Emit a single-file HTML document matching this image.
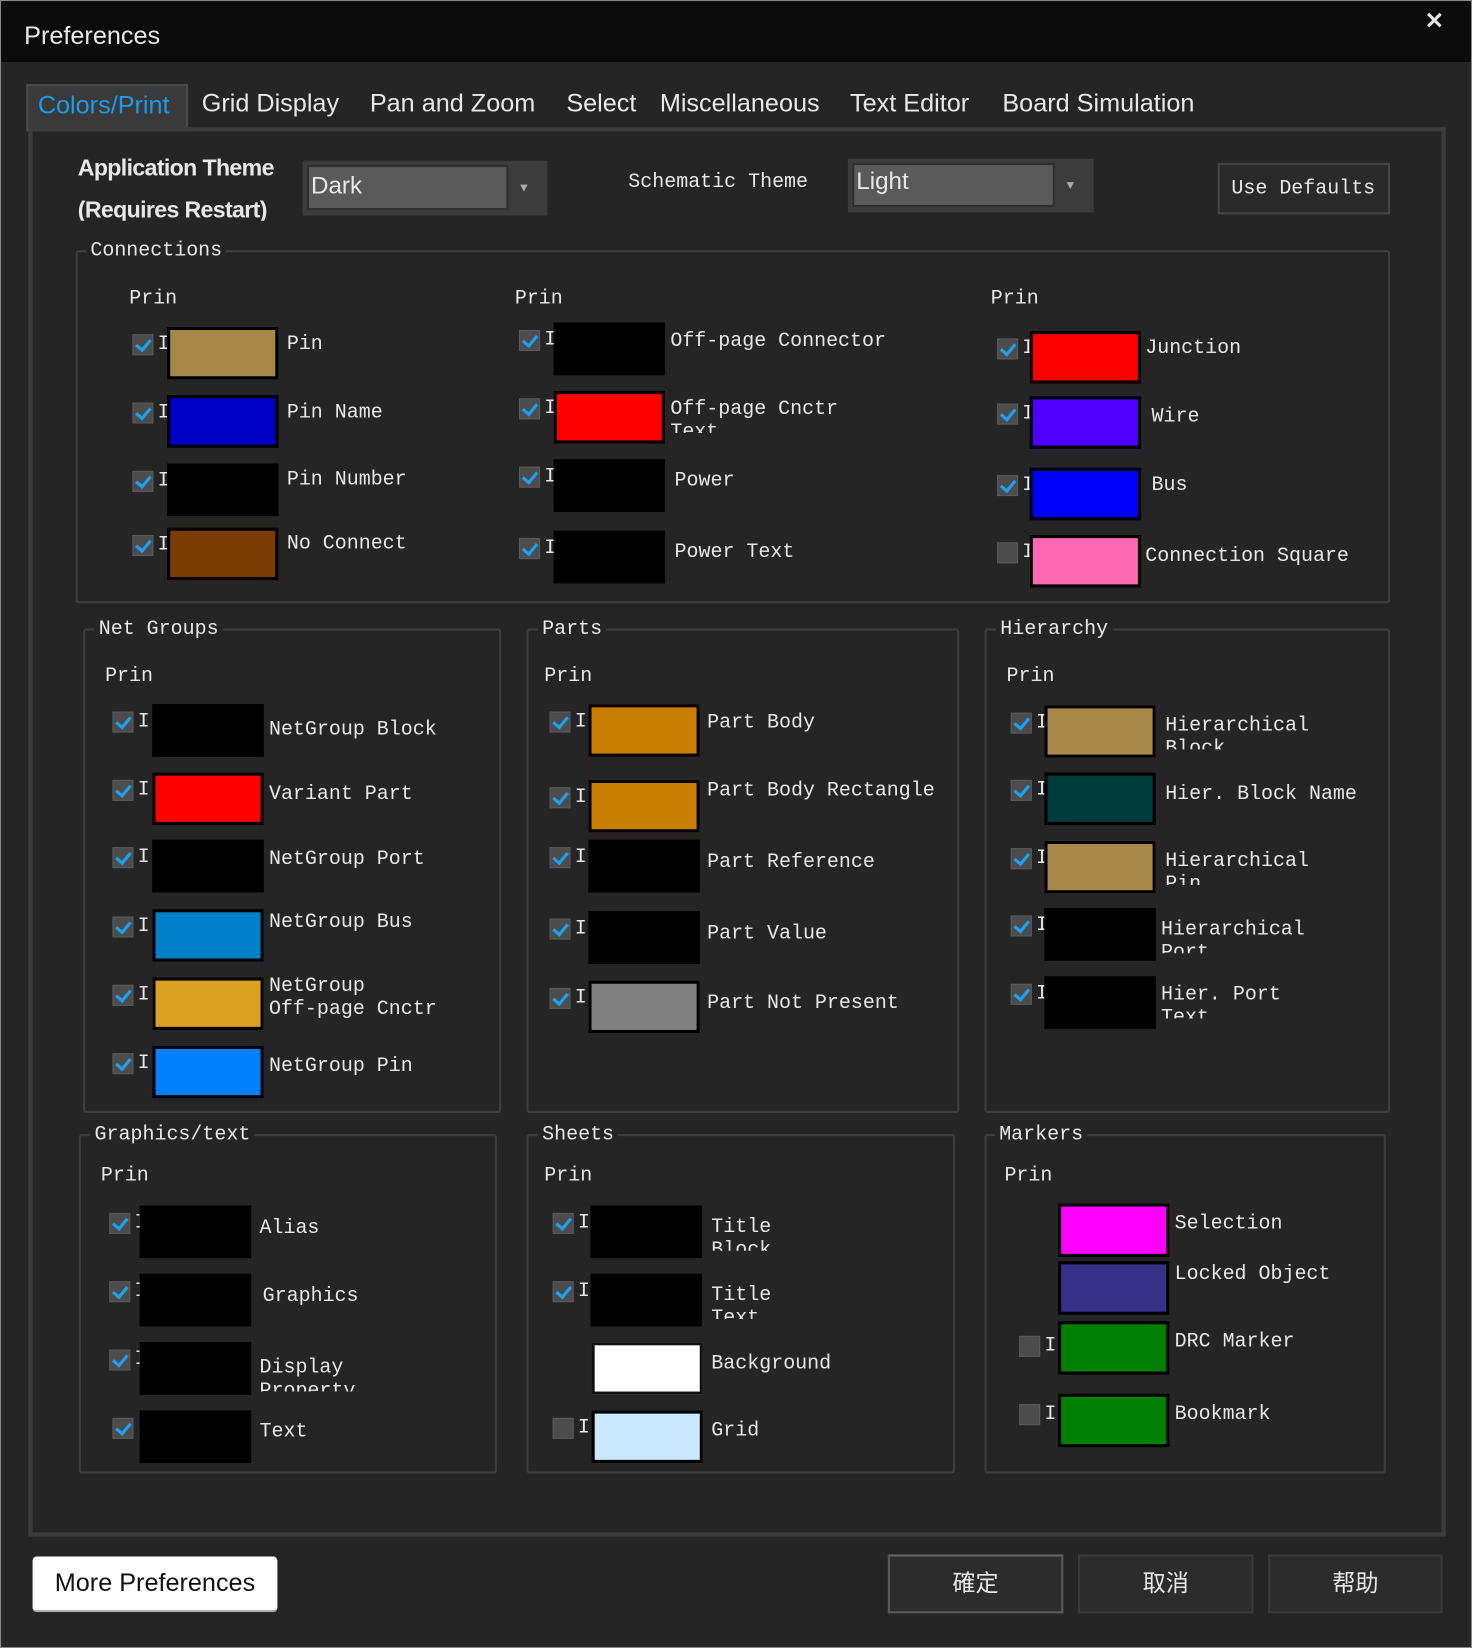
<!DOCTYPE html>
<html><head><meta charset="utf-8">
<style>
html,body{margin:0;padding:0;background:#252525;width:1472px;height:1648px;overflow:hidden}
#w{position:absolute;left:0;top:0;width:1401px;height:1568px;transform-origin:0 0;transform:scale(1.05068,1.05102);background:#252525;font-family:"Liberation Mono",monospace;color:#e8e8e8;font-size:19px}
#w div{position:absolute;box-sizing:border-box}
.t{white-space:pre;line-height:22px}
.sans{font-family:"Liberation Sans","Noto Sans CJK SC",sans-serif}
.grp{border:2px solid #3e3e3e;border-radius:3px}
.gt{background:#252525;padding:0 4px;line-height:22px}
.cb{width:20px;height:20px;background:#4c4c4c;border:1px solid #5a5a5a}
.ck::after{content:"";position:absolute;left:5px;top:1px;width:6px;height:11px;border:solid #1ea0f0;border-width:0 3px 3px 0;transform:rotate(40deg)}
.sw{width:106px;height:50px;border:3px solid #000}
.clip{overflow:hidden;height:34px}
.btn{background:#2c2c2c;border:2px solid #3a3a3a;text-align:center;font-family:"Liberation Sans","Noto Sans CJK SC",sans-serif;font-size:22px;line-height:52px}
.tab{font-size:24px}
</style></head><body>
<div id="w">
<div style="left:0;top:0;width:1401px;height:59px;background:#0b0b0b"></div>
<div class="t sans" style="left:23px;top:24px;font-size:24px">Preferences</div>
<div class="t sans" style="left:1356px;top:9px;font-size:22px;font-weight:bold">✕</div>
<div style="left:0;top:0;width:1401px;height:1568px;border:1px solid #888"></div>

<!-- tabs -->
<div style="left:25px;top:80px;width:154px;height:45px;background:#3a3a3a;border:2px solid #4a4a4a;border-bottom:none"></div>
<div style="left:27px;top:121px;width:1349px;height:1341px;border:4px solid #3c3c3c"></div>
<div class="t sans tab" style="left:36px;top:90px;color:#1e9be8">Colors/Print</div>
<div class="t sans tab" style="left:192px;top:88px">Grid Display</div>
<div class="t sans tab" style="left:352px;top:88px">Pan and Zoom</div>
<div class="t sans tab" style="left:539px;top:88px">Select</div>
<div class="t sans tab" style="left:628px;top:88px">Miscellaneous</div>
<div class="t sans tab" style="left:809px;top:88px">Text Editor</div>
<div class="t sans tab" style="left:954px;top:88px">Board Simulation</div>

<!-- top row -->
<div class="sans" style="left:74px;top:140px;width:200px;height:70px;overflow:hidden;font-weight:bold;font-size:22px;letter-spacing:-0.6px;line-height:40px;white-space:pre">Application Theme
(Requires Restart)</div>
<div style="left:288px;top:153px;width:233px;height:52px;background:#3c3c3c"></div>
<div style="left:292px;top:157px;width:192px;height:43px;background:#5a5a5a;border:2px solid #2e2e2e"></div>
<div class="t sans" style="left:296px;top:165px;font-size:23px">Dark</div>
<div class="t" style="left:495px;top:168px;font-size:12px;color:#aaa">▼</div>
<div class="t" style="left:598px;top:162px">Schematic Theme</div>
<div style="left:807px;top:151px;width:234px;height:51px;background:#3c3c3c"></div>
<div style="left:811px;top:155px;width:193px;height:42px;background:#5a5a5a;border:2px solid #2e2e2e"></div>
<div class="t sans" style="left:815px;top:161px;font-size:23px">Light</div>
<div class="t" style="left:1015px;top:166px;font-size:12px;color:#aaa">▼</div>
<div style="left:1159px;top:155px;width:164px;height:49px;border:2px solid #444;background:#2a2a2a"></div>
<div class="t" style="left:1172px;top:168px">Use Defaults</div>

<!-- Connections -->
<div class="grp" style="left:72px;top:238px;width:1251px;height:336px"></div>
<div class="t gt" style="left:82px;top:227px">Connections</div>
<div class="t" style="left:123px;top:273px">Prin</div>
<div class="cb ck" style="left:126px;top:318px"></div><div class="t" style="left:150px;top:316px">I</div><div class="sw" style="left:159px;top:311px;background:#a88848"></div><div class="t" style="left:273px;top:316px">Pin</div>
<div class="cb ck" style="left:126px;top:383px"></div><div class="t" style="left:150px;top:381px">I</div><div class="sw" style="left:159px;top:376px;background:#0000c8"></div><div class="t" style="left:273px;top:381px">Pin Name</div>
<div class="cb ck" style="left:126px;top:448px"></div><div class="t" style="left:150px;top:446px">I</div><div class="sw" style="left:159px;top:441px;background:#000"></div><div class="t" style="left:273px;top:445px">Pin Number</div>
<div class="cb ck" style="left:126px;top:509px"></div><div class="t" style="left:150px;top:507px">I</div><div class="sw" style="left:159px;top:502px;background:#7a3c00"></div><div class="t" style="left:273px;top:506px">No Connect</div>

<div class="t" style="left:490px;top:273px">Prin</div>
<div class="cb ck" style="left:494px;top:314px"></div><div class="t" style="left:518px;top:312px">I</div><div class="sw" style="left:527px;top:307px;background:#000"></div><div class="t" style="left:638px;top:313px">Off-page Connector</div>
<div class="cb ck" style="left:494px;top:379px"></div><div class="t" style="left:518px;top:377px">I</div><div class="sw" style="left:527px;top:372px;background:#ff0000"></div><div class="t clip" style="left:638px;top:378px">Off-page Cnctr
Text</div>
<div class="cb ck" style="left:494px;top:444px"></div><div class="t" style="left:518px;top:442px">I</div><div class="sw" style="left:527px;top:437px;background:#000"></div><div class="t" style="left:642px;top:446px">Power</div>
<div class="cb ck" style="left:494px;top:512px"></div><div class="t" style="left:518px;top:510px">I</div><div class="sw" style="left:527px;top:505px;background:#000"></div><div class="t" style="left:642px;top:514px">Power Text</div>

<div class="t" style="left:943px;top:273px">Prin</div>
<div class="cb ck" style="left:949px;top:322px"></div><div class="t" style="left:973px;top:320px">I</div><div class="sw" style="left:980px;top:315px;background:#ff0000"></div><div class="t" style="left:1090px;top:320px">Junction</div>
<div class="cb ck" style="left:949px;top:384px"></div><div class="t" style="left:973px;top:382px">I</div><div class="sw" style="left:980px;top:377px;background:#5000ff"></div><div class="t" style="left:1096px;top:385px">Wire</div>
<div class="cb ck" style="left:949px;top:452px"></div><div class="t" style="left:973px;top:450px">I</div><div class="sw" style="left:980px;top:445px;background:#0000ff"></div><div class="t" style="left:1096px;top:450px">Bus</div>
<div class="cb" style="left:949px;top:516px"></div><div class="t" style="left:973px;top:514px">I</div><div class="sw" style="left:980px;top:509px;background:#ff69b4"></div><div class="t" style="left:1090px;top:518px">Connection Square</div>

<!-- Net Groups -->
<div class="grp" style="left:79px;top:598px;width:398px;height:461px"></div>
<div class="t gt" style="left:90px;top:587px">Net Groups</div>
<div class="t" style="left:100px;top:632px">Prin</div>
<div class="cb ck" style="left:107px;top:677px"></div><div class="t" style="left:131px;top:675px">I</div><div class="sw" style="left:145px;top:670px;background:#000"></div><div class="t" style="left:256px;top:683px">NetGroup Block</div>
<div class="cb ck" style="left:107px;top:742px"></div><div class="t" style="left:131px;top:740px">I</div><div class="sw" style="left:145px;top:735px;background:#ff0000"></div><div class="t" style="left:256px;top:744px">Variant Part</div>
<div class="cb ck" style="left:107px;top:806px"></div><div class="t" style="left:131px;top:804px">I</div><div class="sw" style="left:145px;top:799px;background:#000"></div><div class="t" style="left:256px;top:806px">NetGroup Port</div>
<div class="cb ck" style="left:107px;top:872px"></div><div class="t" style="left:131px;top:870px">I</div><div class="sw" style="left:145px;top:865px;background:#0080c8"></div><div class="t" style="left:256px;top:866px">NetGroup Bus</div>
<div class="cb ck" style="left:107px;top:937px"></div><div class="t" style="left:131px;top:935px">I</div><div class="sw" style="left:145px;top:930px;background:#dca020"></div><div class="t" style="left:256px;top:927px">NetGroup
Off-page Cnctr</div>
<div class="cb ck" style="left:107px;top:1002px"></div><div class="t" style="left:131px;top:1000px">I</div><div class="sw" style="left:145px;top:995px;background:#0080ff"></div><div class="t" style="left:256px;top:1003px">NetGroup Pin</div>

<!-- Parts -->
<div class="grp" style="left:501px;top:598px;width:412px;height:461px"></div>
<div class="t gt" style="left:512px;top:587px">Parts</div>
<div class="t" style="left:518px;top:632px">Prin</div>
<div class="cb ck" style="left:523px;top:677px"></div><div class="t" style="left:547px;top:675px">I</div><div class="sw" style="left:560px;top:670px;background:#c87f00"></div><div class="t" style="left:673px;top:676px">Part Body</div>
<div class="cb ck" style="left:523px;top:749px"></div><div class="t" style="left:547px;top:747px">I</div><div class="sw" style="left:560px;top:742px;background:#c87f00"></div><div class="t" style="left:673px;top:741px">Part Body Rectangle</div>
<div class="cb ck" style="left:523px;top:806px"></div><div class="t" style="left:547px;top:804px">I</div><div class="sw" style="left:560px;top:799px;background:#000"></div><div class="t" style="left:673px;top:809px">Part Reference</div>
<div class="cb ck" style="left:523px;top:874px"></div><div class="t" style="left:547px;top:872px">I</div><div class="sw" style="left:560px;top:867px;background:#000"></div><div class="t" style="left:673px;top:877px">Part Value</div>
<div class="cb ck" style="left:523px;top:940px"></div><div class="t" style="left:547px;top:938px">I</div><div class="sw" style="left:560px;top:933px;background:#808080"></div><div class="t" style="left:673px;top:943px">Part Not Present</div>

<!-- Hierarchy -->
<div class="grp" style="left:937px;top:598px;width:386px;height:461px"></div>
<div class="t gt" style="left:948px;top:587px">Hierarchy</div>
<div class="t" style="left:958px;top:632px">Prin</div>
<div class="cb ck" style="left:962px;top:678px"></div><div class="t" style="left:986px;top:676px">I</div><div class="sw" style="left:994px;top:671px;background:#a88848"></div><div class="t clip" style="left:1109px;top:679px">Hierarchical
Block</div>
<div class="cb ck" style="left:962px;top:742px"></div><div class="t" style="left:986px;top:740px">I</div><div class="sw" style="left:994px;top:735px;background:#003c3c"></div><div class="t" style="left:1109px;top:744px">Hier. Block Name</div>
<div class="cb ck" style="left:962px;top:807px"></div><div class="t" style="left:986px;top:805px">I</div><div class="sw" style="left:994px;top:800px;background:#a88848"></div><div class="t clip" style="left:1109px;top:808px">Hierarchical
Pin</div>
<div class="cb ck" style="left:962px;top:871px"></div><div class="t" style="left:986px;top:869px">I</div><div class="sw" style="left:994px;top:864px;background:#000"></div><div class="t clip" style="left:1105px;top:873px">Hierarchical
Port</div>
<div class="cb ck" style="left:962px;top:936px"></div><div class="t" style="left:986px;top:934px">I</div><div class="sw" style="left:994px;top:929px;background:#000"></div><div class="t clip" style="left:1105px;top:935px">Hier. Port
Text</div>

<!-- Graphics/text -->
<div class="grp" style="left:75px;top:1079px;width:398px;height:323px"></div>
<div class="t gt" style="left:86px;top:1068px">Graphics/text</div>
<div class="t" style="left:96px;top:1107px">Prin</div>
<div class="cb ck" style="left:104px;top:1154px"></div><div class="t" style="left:128px;top:1152px">I</div><div class="sw" style="left:133px;top:1147px;background:#000"></div><div class="t" style="left:247px;top:1157px">Alias</div>
<div class="cb ck" style="left:104px;top:1219px"></div><div class="t" style="left:128px;top:1217px">I</div><div class="sw" style="left:133px;top:1212px;background:#000"></div><div class="t" style="left:250px;top:1222px">Graphics</div>
<div class="cb ck" style="left:104px;top:1284px"></div><div class="t" style="left:128px;top:1282px">I</div><div class="sw" style="left:133px;top:1277px;background:#000"></div><div class="t clip" style="left:247px;top:1290px">Display
Property</div>
<div class="cb ck" style="left:107px;top:1349px"></div><div class="t" style="left:131px;top:1347px">I</div><div class="sw" style="left:133px;top:1342px;background:#000"></div><div class="t" style="left:247px;top:1351px">Text</div>

<!-- Sheets -->
<div class="grp" style="left:501px;top:1079px;width:408px;height:323px"></div>
<div class="t gt" style="left:512px;top:1068px">Sheets</div>
<div class="t" style="left:518px;top:1107px">Prin</div>
<div class="cb ck" style="left:526px;top:1154px"></div><div class="t" style="left:550px;top:1152px">I</div><div class="sw" style="left:562px;top:1147px;background:#000"></div><div class="t clip" style="left:677px;top:1156px">Title
Block</div>
<div class="cb ck" style="left:526px;top:1219px"></div><div class="t" style="left:550px;top:1217px">I</div><div class="sw" style="left:562px;top:1212px;background:#000"></div><div class="t clip" style="left:677px;top:1221px">Title
Text</div>
<div class="sw" style="left:563px;top:1277px;background:#ffffff;border-color:#111"></div><div class="t" style="left:677px;top:1286px">Background</div>
<div class="cb" style="left:526px;top:1349px"></div><div class="t" style="left:550px;top:1347px">I</div><div class="sw" style="left:563px;top:1342px;background:#cce8ff"></div><div class="t" style="left:677px;top:1350px">Grid</div>

<!-- Markers -->
<div class="grp" style="left:937px;top:1079px;width:382px;height:323px"></div>
<div class="t gt" style="left:947px;top:1068px">Markers</div>
<div class="t" style="left:956px;top:1107px">Prin</div>
<div class="sw" style="left:1007px;top:1145px;background:#ff00ff;height:51px"></div><div class="t" style="left:1118px;top:1153px">Selection</div>
<div class="sw" style="left:1007px;top:1200px;background:#383088;height:51px"></div><div class="t" style="left:1118px;top:1201px">Locked Object</div>
<div class="cb" style="left:970px;top:1271px"></div><div class="t" style="left:994px;top:1269px">I</div><div class="sw" style="left:1007px;top:1257px;background:#008000;height:51px"></div><div class="t" style="left:1118px;top:1265px">DRC Marker</div>
<div class="cb" style="left:970px;top:1336px"></div><div class="t" style="left:994px;top:1334px">I</div><div class="sw" style="left:1007px;top:1326px;background:#008000;height:51px"></div><div class="t" style="left:1118px;top:1334px">Bookmark</div>

<!-- bottom -->
<div class="sans" style="left:31px;top:1481px;width:233px;height:53px;background:#fff;border-radius:4px;border-bottom:2px solid #aaa;color:#111;font-size:24px;line-height:52px;text-align:center">More Preferences</div>
<div class="btn" style="left:845px;top:1479px;width:167px;height:56px;border-color:#5a5a5a;border-top-color:#666">確定</div>
<div class="btn" style="left:1026px;top:1479px;width:167px;height:56px">取消</div>
<div class="btn" style="left:1207px;top:1479px;width:166px;height:56px">帮助</div>
</div>
</body></html>
